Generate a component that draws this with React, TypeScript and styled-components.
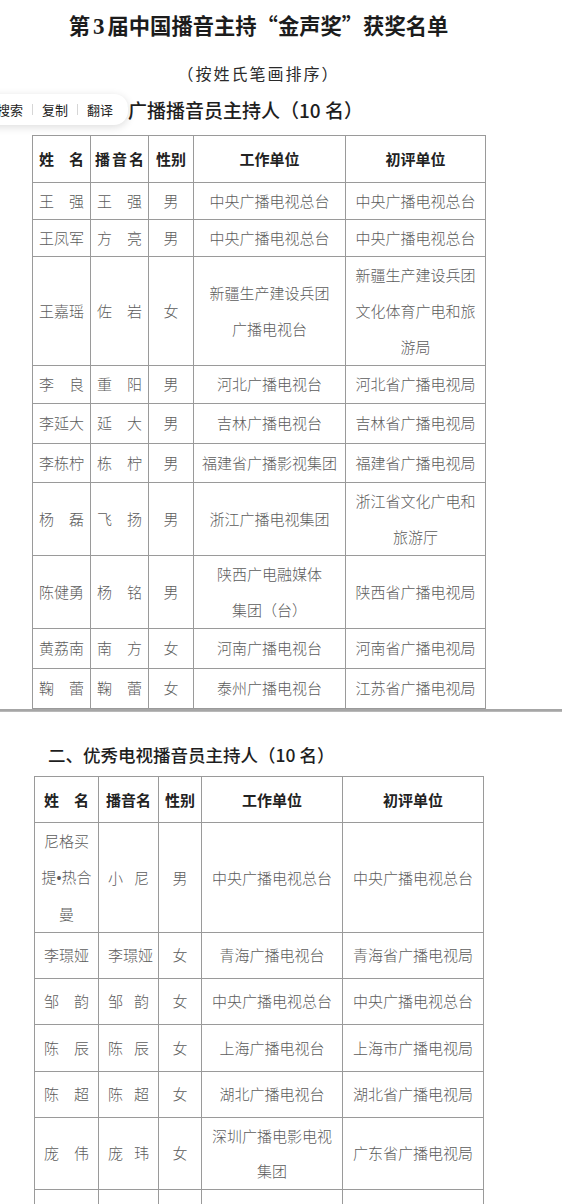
import React from "react";
import styled, { createGlobalStyle } from "styled-components";

const GlobalStyle = createGlobalStyle`
  html, body { margin: 0; padding: 0; background: #ffffff; }
  body { font-family: "Noto Sans CJK SC", "Noto Sans", sans-serif; }
`;

const Page = styled.div`
  width: 562px;
  height: 1204px;
  overflow: hidden;
  background: #ffffff;
  display: flex;
  flex-direction: column;
`;

const Sheet = styled.section<{ $pt: number }>`
  display: flex;
  flex-direction: column;
  padding-top: ${(p) => p.$pt}px;
`;

const Column = styled.div`
  width: 453px;
  margin-left: 32px;
  display: flex;
  flex-direction: column;
`;

const Title = styled.h1`
  margin: 0;
  height: 32px;
  line-height: 32px;
  text-align: center;
  font-family: "Noto Sans CJK SC", serif;
  font-weight: 700;
  font-size: 21.3px;
  color: #1c1c1c;
  white-space: nowrap;
`;

const Num = styled.span`
  font-family: "Liberation Serif", serif;
  font-weight: 700;
  font-size: 23px;
  margin: 0 3px;
`;

const Subtitle = styled.div`
  margin-top: 20px;
  height: 24px;
  line-height: 24px;
  text-align: center;
  font-family: "Noto Sans CJK SC", serif;
  font-weight: 400;
  font-size: 16px;
  letter-spacing: 2px;
  color: #2a2a2a;
`;

const HeadingWrap = styled.div<{ $mt: number }>`
  position: relative;
  margin-top: ${(p) => p.$mt}px;
  height: 28px;
`;

const Heading = styled.h2<{ $left: number; $size: number }>`
  margin: 0 0 0 ${(p) => p.$left}px;
  line-height: 28px;
  font-family: "Noto Sans CJK SC", sans-serif;
  font-weight: 500;
  font-size: ${(p) => p.$size}px;
  color: #1e1e1e;
  white-space: nowrap;
`;

const Popup = styled.div`
  position: absolute;
  left: -14px;
  top: -2px;
  width: 142px;
  box-sizing: border-box;
  height: 31px;
  padding: 0 0 0 11px;
  display: flex;
  align-items: center;
  gap: 9px;
  background: #ffffff;
  border-radius: 0 14px 14px 0;
  box-shadow: 0 2px 8px rgba(0, 0, 0, 0.14);
`;

const PopupItem = styled.span`
  font-family: "Noto Sans CJK SC", sans-serif;
  font-size: 13px;
  color: #222;
  line-height: 31px;
`;

const PopupSep = styled.span`
  width: 1px;
  height: 11px;
  background: #d6d6d6;
`;

const Table = styled.table<{ $left: number; $mt: number; $width: number }>`
  margin: ${(p) => p.$mt}px 0 0 ${(p) => p.$left}px;
  width: ${(p) => p.$width}px;
  border-collapse: collapse;
  table-layout: fixed;
`;

const Col = styled.col<{ $w: number }>`
  width: ${(p) => p.$w}px;
`;

const Row = styled.tr<{ $h: number }>`
  height: ${(p) => p.$h}px;
`;

const Th = styled.th<{ $pad: number; $spread?: boolean }>`
  border: 1px solid #9a9a9a;
  padding: 0 ${(p) => p.$pad}px;
  font-family: "Noto Sans CJK SC", sans-serif;
  font-weight: 700;
  font-size: 15px;
  color: #222;
  line-height: 20px;
  text-align: ${(p) => (p.$spread ? "justify" : "center")};
  text-align-last: ${(p) => (p.$spread ? "justify" : "center")};
  vertical-align: middle;
  white-space: nowrap;
`;

const Td = styled.td<{ $pad: number; $spread?: boolean; $lh: number }>`
  border: 1px solid #9a9a9a;
  padding: 0 ${(p) => p.$pad}px;
  font-family: "Noto Sans CJK SC", sans-serif;
  font-weight: 300;
  font-size: 15px;
  color: #5c5c5c;
  line-height: ${(p) => p.$lh}px;
  text-align: ${(p) => (p.$spread ? "justify" : "center")};
  text-align-last: ${(p) => (p.$spread ? "justify" : "center")};
  vertical-align: middle;
  white-space: nowrap;
`;

const Dot = styled.span`
  font-family: "Liberation Sans", sans-serif;
  font-size: 14px;
`;

const Seam = styled.div`
  height: 8px;
  border-top: 2px solid #a6a6a6;
  border-bottom: 1px solid #b8b8b8;
  background: linear-gradient(#e2e2e2, #cdcdcd);
`;

type Entry = {
  h: number;
  name: React.ReactNode[];
  stage: string[];
  g: string;
  work: string[];
  evalUnit: string[];
};

const table1: Entry[] = [
  { h: 35.5, name: ["王强"], stage: ["王强"], g: "男", work: ["中央广播电视总台"], evalUnit: ["中央广播电视总台"] },
  { h: 36.5, name: ["王凤军"], stage: ["方亮"], g: "男", work: ["中央广播电视总台"], evalUnit: ["中央广播电视总台"] },
  { h: 108.5, name: ["王嘉瑶"], stage: ["佐岩"], g: "女", work: ["新疆生产建设兵团", "广播电视台"], evalUnit: ["新疆生产建设兵团", "文化体育广电和旅", "游局"] },
  { h: 38.5, name: ["李良"], stage: ["重阳"], g: "男", work: ["河北广播电视台"], evalUnit: ["河北省广播电视局"] },
  { h: 39.5, name: ["李延大"], stage: ["延大"], g: "男", work: ["吉林广播电视台"], evalUnit: ["吉林省广播电视局"] },
  { h: 39.5, name: ["李栋柠"], stage: ["栋柠"], g: "男", work: ["福建省广播影视集团"], evalUnit: ["福建省广播电视局"] },
  { h: 70.5, name: ["杨磊"], stage: ["飞扬"], g: "男", work: ["浙江广播电视集团"], evalUnit: ["浙江省文化广电和", "旅游厅"] },
  { h: 70.5, name: ["陈健勇"], stage: ["杨铭"], g: "男", work: ["陕西广电融媒体", "集团（台）"], evalUnit: ["陕西省广播电视局"] },
  { h: 39.5, name: ["黄荔南"], stage: ["南方"], g: "女", work: ["河南广播电视台"], evalUnit: ["河南省广播电视局"] },
  { h: 40.5, name: ["鞠蕾"], stage: ["鞠蕾"], g: "女", work: ["泰州广播电视台"], evalUnit: ["江苏省广播电视局"] },
];

const table2: Entry[] = [
  {
    h: 109,
    name: ["尼格买", <>提<Dot>•</Dot>热合</>, "曼"],
    stage: ["小尼"],
    g: "男",
    work: ["中央广播电视总台"],
    evalUnit: ["中央广播电视总台"],
  },
  { h: 46, name: ["李璟娅"], stage: ["李璟娅"], g: "女", work: ["青海广播电视台"], evalUnit: ["青海省广播电视局"] },
  { h: 46, name: ["邹韵"], stage: ["邹韵"], g: "女", work: ["中央广播电视总台"], evalUnit: ["中央广播电视总台"] },
  { h: 47, name: ["陈辰"], stage: ["陈辰"], g: "女", work: ["上海广播电视台"], evalUnit: ["上海市广播电视局"] },
  { h: 46, name: ["陈超"], stage: ["陈超"], g: "女", work: ["湖北广播电视台"], evalUnit: ["湖北省广播电视局"] },
  { h: 70, name: ["庞伟"], stage: ["庞玮"], g: "女", work: ["深圳广播电影电视", "集团"], evalUnit: ["广东省广播电视局"] },
  { h: 70, name: [""], stage: [""], g: "", work: [""], evalUnit: [""] },
];

const Lines: React.FC<{ lines: React.ReactNode[] }> = ({ lines }) => (
  <>
    {lines.map((l, i) => (
      <React.Fragment key={i}>
        {i > 0 && <br />}
        {l}
      </React.Fragment>
    ))}
  </>
);

type TableSpec = {
  left: number;
  top: number;
  cols: number[];
  headH: number;
  namePad: number;
  lh: number;
  rows: Entry[];
};

const AwardTable: React.FC<{ spec: TableSpec }> = ({ spec }) => {
  const width = spec.cols.reduce((a, b) => a + b, 0);
  return (
    <Table $left={spec.left} $mt={spec.top} $width={width}>
      <colgroup>
        {spec.cols.map((w, i) => (
          <Col key={i} $w={w} />
        ))}
      </colgroup>
      <thead>
        <Row $h={spec.headH}>
          <Th $pad={spec.namePad} $spread>姓名</Th>
          <Th $pad={spec.namePad - 2} $spread>播音名</Th>
          <Th $pad={2}>性别</Th>
          <Th $pad={4}>工作单位</Th>
          <Th $pad={4}>初评单位</Th>
        </Row>
      </thead>
      <tbody>
        {spec.rows.map((r, i) => (
          <Row key={i} $h={r.h}>
            <Td $pad={r.name.length === 1 ? spec.namePad : 2} $lh={spec.lh} $spread={r.name.length === 1}>
              <Lines lines={r.name} />
            </Td>
            <Td $pad={spec.namePad} $lh={spec.lh} $spread>
              <Lines lines={r.stage} />
            </Td>
            <Td $pad={2} $lh={spec.lh}>{r.g}</Td>
            <Td $pad={3} $lh={spec.lh}>
              <Lines lines={r.work} />
            </Td>
            <Td $pad={3} $lh={spec.lh}>
              <Lines lines={r.evalUnit} />
            </Td>
          </Row>
        ))}
      </tbody>
    </Table>
  );
};

const spec1: TableSpec = {
  left: 32,
  top: 11,
  cols: [58, 58, 45, 152, 140],
  headH: 46.5,
  namePad: 6,
  lh: 36,
  rows: table1,
};

const spec2: TableSpec = {
  left: 34,
  top: 7,
  cols: [64, 60, 43, 141, 141],
  headH: 46,
  namePad: 9,
  lh: 35.5,
  rows: table2,
};

export default function App() {
  return (
    <>
      <GlobalStyle />
      <Page>
        <Sheet $pt={9}>
          <Column>
            <Title>
              第<Num>3</Num>届中国播音主持“金声奖”获奖名单
            </Title>
            <Subtitle>（按姓氏笔画排序）</Subtitle>
          </Column>
          <HeadingWrap $mt={11}>
            <Heading $left={52} $size={19}>一、优秀广播播音员主持人（10 名）</Heading>
            <Popup>
              <PopupItem>搜索</PopupItem>
              <PopupSep />
              <PopupItem>复制</PopupItem>
              <PopupSep />
              <PopupItem>翻译</PopupItem>
            </Popup>
          </HeadingWrap>
          <AwardTable spec={spec1} />
        </Sheet>
        <Seam />
        <Sheet $pt={0}>
          <HeadingWrap $mt={29}>
            <Heading $left={48} $size={17.5}>二、优秀电视播音员主持人（10 名）</Heading>
          </HeadingWrap>
          <AwardTable spec={spec2} />
        </Sheet>
      </Page>
    </>
  );
}
